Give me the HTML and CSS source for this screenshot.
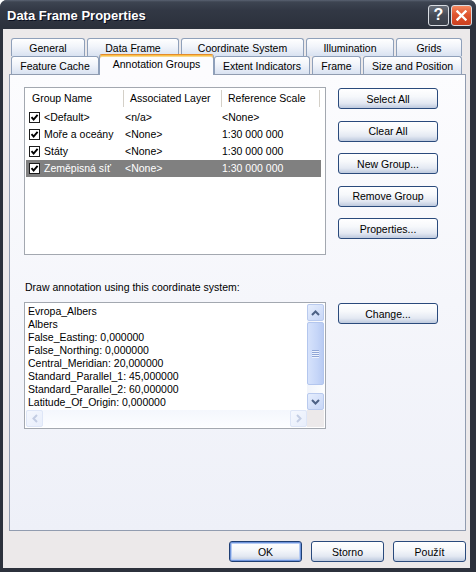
FILE: index.html
```html
<!DOCTYPE html>
<html>
<head>
<meta charset="utf-8">
<link rel="stylesheet" href="styles.css">
</head>
<body>
<div class="window">
  <div class="titlebar">
    <span class="title">Data Frame Properties</span>
    <div class="tbtns">
      <span class="tb help">?</span>
      <span class="tb close"><svg width="11" height="11" viewBox="0 0 11 11"><path d="M1.5 1.5 L9.5 9.5 M9.5 1.5 L1.5 9.5" stroke="#fff" stroke-width="2.4" stroke-linecap="square" fill="none"/></svg></span>
    </div>
  </div>
  <div class="client">
    <div class="tabs">
      <div class="tabrow">
        <div class="tab w-general">General</div>
        <div class="tab w-dframe">Data Frame</div>
        <div class="tab w-coord">Coordinate System</div>
        <div class="tab w-illum">Illumination</div>
        <div class="tab w-grids">Grids</div>
      </div>
      <div class="tabrow">
        <div class="tab w-cache">Feature Cache</div>
        <div class="tab sel w-annot">Annotation Groups</div>
        <div class="tab w-extent">Extent Indicators</div>
        <div class="tab w-frame">Frame</div>
        <div class="tab w-size">Size and Position</div>
      </div>
    </div>
    <div class="panel">
      <div class="top">
        <div class="list">
          <div class="lhead">
            <div class="hc">Group Name</div>
            <div class="hc">Associated Layer</div>
            <div class="hc">Reference Scale</div>
          </div>
          <div class="lrow">
            <div class="c1"><span class="chk"><svg width="9" height="9" viewBox="0 0 9 9"><path d="M1.5 4.2 L3.6 6.5 L7.6 1.8" stroke="#000" stroke-width="1.9" fill="none"/></svg></span>&lt;Default&gt;</div>
            <div class="c2 na">&lt;n/a&gt;</div>
            <div class="c3">&lt;None&gt;</div>
          </div>
          <div class="lrow">
            <div class="c1"><span class="chk"><svg width="9" height="9" viewBox="0 0 9 9"><path d="M1.5 4.2 L3.6 6.5 L7.6 1.8" stroke="#000" stroke-width="1.9" fill="none"/></svg></span>Moře a oceány</div>
            <div class="c2">&lt;None&gt;</div>
            <div class="c3">1:30 000 000</div>
          </div>
          <div class="lrow">
            <div class="c1"><span class="chk"><svg width="9" height="9" viewBox="0 0 9 9"><path d="M1.5 4.2 L3.6 6.5 L7.6 1.8" stroke="#000" stroke-width="1.9" fill="none"/></svg></span>Státy</div>
            <div class="c2">&lt;None&gt;</div>
            <div class="c3">1:30 000 000</div>
          </div>
          <div class="lrow selrow">
            <div class="c1"><span class="chk"><svg width="9" height="9" viewBox="0 0 9 9"><path d="M1.5 4.2 L3.6 6.5 L7.6 1.8" stroke="#000" stroke-width="1.9" fill="none"/></svg></span>Zeměpisná síť</div>
            <div class="c2">&lt;None&gt;</div>
            <div class="c3">1:30 000 000</div>
          </div>
        </div>
        <div class="btncol">
          <button class="btn">Select All</button>
          <button class="btn">Clear All</button>
          <button class="btn">New Group...</button>
          <button class="btn">Remove Group</button>
          <button class="btn">Properties...</button>
        </div>
      </div>
      <div class="caption">Draw annotation using this coordinate system:</div>
      <div class="bottom">
        <div class="textbox">
          <div class="tb-main">
            <div class="text">
              <div>Evropa_Albers</div>
              <div>Albers</div>
              <div>False_Easting: 0,000000</div>
              <div>False_Northing: 0,000000</div>
              <div>Central_Meridian: 20,000000</div>
              <div>Standard_Parallel_1: 45,000000</div>
              <div>Standard_Parallel_2: 60,000000</div>
              <div>Latitude_Of_Origin: 0,000000</div>
            </div>
            <div class="vscroll">
              <div class="sbtn"><svg width="9" height="6" viewBox="0 0 9 6"><path d="M1 5 L4.5 1.5 L8 5" stroke="#4D6185" stroke-width="2" fill="none"/></svg></div>
              <div class="vtrack">
                <div class="thumb">
                  <span class="grip"></span><span class="grip"></span><span class="grip"></span><span class="grip"></span>
                </div>
              </div>
              <div class="sbtn"><svg width="9" height="6" viewBox="0 0 9 6"><path d="M1 1 L4.5 4.5 L8 1" stroke="#4D6185" stroke-width="2" fill="none"/></svg></div>
            </div>
          </div>
          <div class="hrow">
            <div class="hscroll">
              <div class="sbtn dis"><svg width="6" height="9" viewBox="0 0 6 9"><path d="M5 1 L1.5 4.5 L5 8" stroke="#C3CDE3" stroke-width="2" fill="none"/></svg></div>
              <div class="htrack"></div>
              <div class="sbtn dis"><svg width="6" height="9" viewBox="0 0 6 9"><path d="M1 1 L4.5 4.5 L1 8" stroke="#C3CDE3" stroke-width="2" fill="none"/></svg></div>
            </div>
            <div class="corner"></div>
          </div>
        </div>
        <button class="btn change">Change...</button>
      </div>
    </div>
    <div class="footer">
      <button class="btn fbtn default">OK</button>
      <button class="btn fbtn">Storno</button>
      <button class="btn fbtn">Použít</button>
    </div>
  </div>
</div>
</body>
</html>
```
FILE: styles.css
```css
html, body {
  margin: 0;
  padding: 0;
  background: #ffffff;
}
body {
  font-family: "Liberation Sans", Arial, sans-serif;
  font-size: 10.5px;
  color: #000;
}
.window {
  width: 476px;
  height: 572px;
  display: flex;
  flex-direction: column;
  background: #2C313C;
  border-radius: 7px 7px 0 0;
  overflow: hidden;
}
.titlebar {
  height: 29px;
  flex: none;
  display: flex;
  align-items: center;
  padding: 0 4px 0 7px;
  background: linear-gradient(#5A6272 0, #3D4451 2px, #323845 35%, #2B303B 100%);
}
.title {
  flex: 1;
  color: #fff;
  font-weight: bold;
  font-size: 13px;
  text-shadow: 1px 1px 0 #0B1020;
  margin-top: 2px;
}
.tbtns {
  display: flex;
  gap: 2px;
  margin-top: 1px;
}
.tb {
  width: 21px;
  height: 21px;
  box-sizing: border-box;
  border: 1px solid #D8DCE2;
  border-radius: 3px;
  display: flex;
  align-items: center;
  justify-content: center;
}
.help {
  background: linear-gradient(#6A707B, #454A55 50%, #3A3F49);
  color: #fff;
  font-weight: bold;
  font-size: 16px;
  line-height: 1;
}
.close {
  background: linear-gradient(#F58A62, #E0552F 45%, #CC4020);
}
.client {
  flex: 1;
  margin: 0 6px 4px 3px;
  background: #ECE9EA;
  padding: 9px 4px 0 6px;
  display: flex;
  flex-direction: column;
}
.tabrow {
  display: flex;
  gap: 2px;
  height: 18px;
  margin-left: 2px;
}
.tab {
  height: 18px;
  box-sizing: border-box;
  border: 1px solid #8FA0BA;
  border-bottom: none;
  border-radius: 3px 3px 0 0;
  background: linear-gradient(#FFFFFF, #F1F4FA 45%, #D9E2F1);
  display: flex;
  align-items: center;
  justify-content: center;
  padding-top: 1px;
  white-space: nowrap;
}
.tab.sel {
  position: relative;
  z-index: 1;
  height: 21px;
  margin: -2px -2px -1px;
  background: #FCFCFE;
  border-top: 1px solid #E38B2B;
  box-shadow: inset 0 1px 0 #FBC04A, inset 0 2px 0 #F7D98F;
  padding-top: 0;
  padding-bottom: 3px;
}
.w-general { width: 74px; }
.w-dframe { width: 92px; }
.w-coord { width: 123px; }
.w-illum { width: 88px; }
.w-grids { width: 66px; }
.w-cache { width: 88px; }
.w-annot { width: 115px; }
.w-extent { width: 96px; }
.w-frame { width: 49px; }
.w-size { width: 99px; }

.panel {
  width: 457px;
  height: 457px;
  box-sizing: border-box;
  border: 1px solid #919CB0;
  background: linear-gradient(#FCFCFE, #EEF0F8);
  padding: 12px 0 0 14px;
}
.top {
  display: flex;
}
.list {
  width: 302px;
  height: 168px;
  box-sizing: border-box;
  border: 1px solid #A3A8B0;
  background: #fff;
}
.lhead {
  display: grid;
  grid-template-columns: 98px 98px 98px;
  height: 21px;
  margin-left: 1px;
}
.hc {
  border-right: 1px solid #D4D0C8;
  margin: 2px 0 2px;
  padding-left: 6px;
  line-height: 17px;
  white-space: nowrap;
}
.lrow {
  display: grid;
  grid-template-columns: 98px 98px 99px;
  height: 17px;
  line-height: 17px;
  margin-left: 1px;
  width: 295px;
  white-space: nowrap;
}
.c1 {
  display: flex;
  align-items: center;
  padding-left: 3px;
}
.c2 {
  padding-left: 1px;
}
.c3 {
  padding-left: 0;
}
.selrow {
  background: #808080;
  color: #fff;
}
.chk {
  width: 11px;
  height: 11px;
  box-sizing: border-box;
  border: 1px solid #1C1C1C;
  background: #fff;
  display: flex;
  align-items: center;
  justify-content: center;
  margin-right: 4px;
}
.btncol {
  display: flex;
  flex-direction: column;
  gap: 11.5px;
  margin: 1px 0 0 12px;
}
.btn {
  width: 100px;
  height: 21px;
  box-sizing: border-box;
  padding: 0;
  font-family: inherit;
  font-size: 10.5px;
  color: #000;
  border: 1px solid #2A4A7C;
  border-radius: 3px;
  background: linear-gradient(#FFFFFF, #F6F8FB 40%, #E3E8F2 75%, #BDC9DE);
  box-shadow: inset 0 -1px 0 #C2CDE0;
}
.caption {
  margin-top: 26px;
  line-height: 13px;
  padding-left: 1px;
}
.bottom {
  display: flex;
  margin-top: 8px;
}
.textbox {
  width: 302px;
  height: 127px;
  box-sizing: border-box;
  border: 1px solid #A3A8B0;
  padding: 1px;
  background: #fff;
  display: flex;
  flex-direction: column;
}
.tb-main {
  display: flex;
  height: 106px;
}
.text {
  flex: 1;
  padding: 1px 0 0 2px;
  line-height: 13px;
  white-space: nowrap;
  overflow: hidden;
}
.vscroll {
  width: 17px;
  display: flex;
  flex-direction: column;
  background: linear-gradient(to right, #F1F4FB, #FCFDFE);
}
.sbtn {
  width: 17px;
  height: 17px;
  flex: none;
  box-sizing: border-box;
  border: 1px solid #B9CAEE;
  border-radius: 2px;
  background: linear-gradient(135deg, #E6EEFD, #C7D6F7);
  display: flex;
  align-items: center;
  justify-content: center;
}
.vtrack {
  flex: 1;
  padding-top: 1px;
}
.thumb {
  height: 63px;
  box-sizing: border-box;
  border: 1px solid #B3C6EE;
  border-radius: 2px;
  background: linear-gradient(to right, #D6E2FB, #C6D6F8 60%, #B9CBF3);
  display: flex;
  flex-direction: column;
  align-items: center;
  justify-content: center;
  gap: 1px;
}
.grip {
  width: 7px;
  height: 1px;
  background: #8FA5D6;
  box-shadow: 0 1px 0 #EEF3FD;
}
.hrow {
  display: flex;
  height: 17px;
}
.hscroll {
  flex: 1;
  display: flex;
  background: linear-gradient(#F4F7FD, #FCFDFF);
}
.htrack {
  flex: 1;
}
.sbtn.dis {
  border-color: #DEE6F7;
  background: linear-gradient(135deg, #F5F8FE, #E8EEFB);
}
.corner {
  width: 17px;
  background: #ECE9EA;
}
.change {
  margin: 1px 0 0 12px;
}
.footer {
  display: flex;
  justify-content: flex-end;
  gap: 9px;
  margin-top: 10px;
}
.fbtn {
  width: 73px;
}
.default {
  border-color: #1F3F74;
  box-shadow: inset 0 0 0 1px #6E93DA, inset 0 0 0 2px #B7CCF3;
}
```
